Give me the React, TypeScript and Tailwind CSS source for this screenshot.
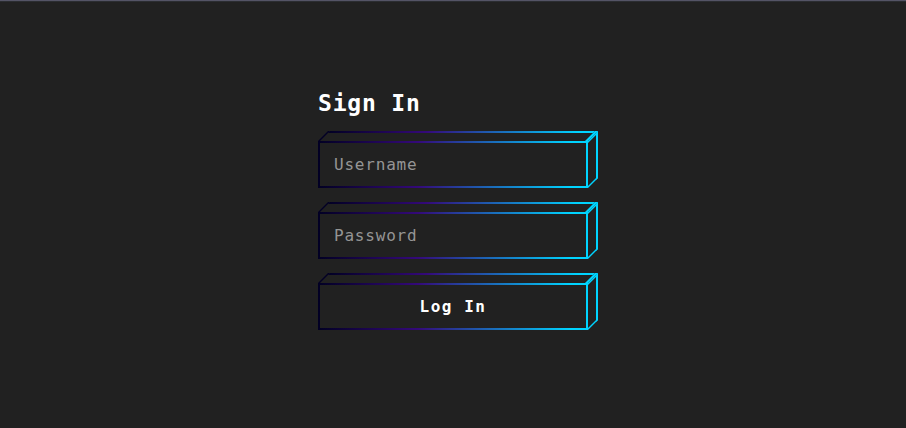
import React from "react";

const edge =
  "[border-image:linear-gradient(90deg,#020024_0%,#340979_37%,#00d4ff_94%)_1]";

function Block({ children }: { children: React.ReactNode }) {
  return (
    <div className={`relative h-[47px] w-[270px] border-2 border-solid ${edge}`}>
      <span
        className={`pointer-events-none absolute -top-3 left-[3px] h-2.5 w-[270px] -skew-x-45 border-2 border-r-[3px] border-b-0 border-solid ${edge}`}
      />
      <span className="pointer-events-none absolute -top-[7px] left-[268px] h-[47px] w-2.5 -skew-y-45 border-2 border-l-0 border-solid border-[#00d4ff]" />
      {children}
    </div>
  );
}

const field =
  "block h-full w-full bg-transparent px-3.5 text-[16px] tracking-[0.8px] text-white outline-none placeholder:text-[#959595]";

export default function App() {
  return (
    <main className="h-[428px] overflow-hidden border-t border-[#545466] bg-[#212121] pl-[318px] pt-[88px] font-['DejaVu_Sans_Mono',monospace] text-white shadow-[inset_0_1px_0_#2b2d31]">
      <form className="flex flex-col gap-6" onSubmit={(e) => e.preventDefault()}>
        <h1 className="h-7 text-[23px] font-bold leading-7 tracking-[0.8px]">Sign In</h1>
        <Block>
          <input className={field} type="text" placeholder="Username" />
        </Block>
        <Block>
          <input className={field} type="password" placeholder="Password" />
        </Block>
        <Block>
          <button className="block h-full w-full text-[16px] font-bold tracking-[1.5px]">
            Log In
          </button>
        </Block>
      </form>
    </main>
  );
}
